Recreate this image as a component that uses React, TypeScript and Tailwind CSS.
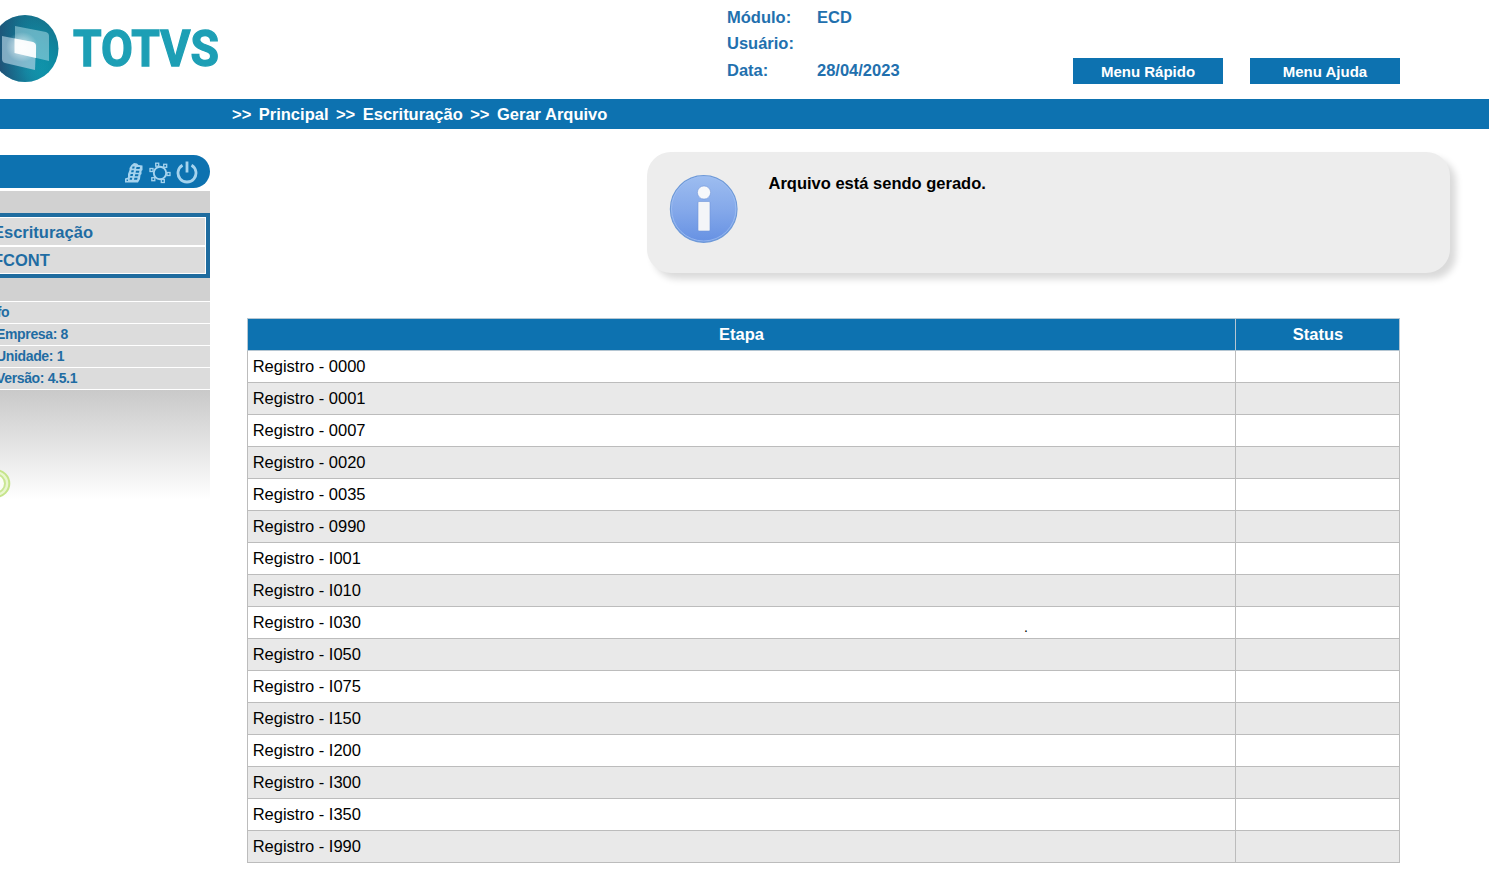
import clsx from "clsx";

const STEPS = [
  "0000",
  "0001",
  "0007",
  "0020",
  "0035",
  "0990",
  "I001",
  "I010",
  "I030",
  "I050",
  "I075",
  "I150",
  "I200",
  "I300",
  "I350",
  "I990",
];

const CRUMBS = ["Principal", "Escrituração", "Gerar Arquivo"];

const INFO = ["Empresa: 8", "Unidade: 1", "Versão: 4.5.1"];

function Logo() {
  return (
    <svg width="232" height="99" viewBox="0 0 232 99" className="shrink-0">
      <defs>
        <radialGradient id="ball" cx="0.5" cy="0.85" r="0.9">
          <stop offset="0" stopColor="#12a3b8" />
          <stop offset="0.5" stopColor="#0e8ba3" />
          <stop offset="1" stopColor="#17708a" />
        </radialGradient>
        <linearGradient id="shade" x1="0" y1="0.6" x2="1" y2="0.4">
          <stop offset="0" stopColor="#2b3560" stopOpacity="0.8" />
          <stop offset="0.4" stopColor="#1d4a73" stopOpacity="0.4" />
          <stop offset="0.8" stopColor="#0f8aa5" stopOpacity="0" />
        </linearGradient>
        <radialGradient id="glow">
          <stop offset="0" stopColor="#fff" stopOpacity="0.75" />
          <stop offset="1" stopColor="#fff" stopOpacity="0" />
        </radialGradient>
      </defs>
      <circle cx="25" cy="48.5" r="33.5" fill="url(#ball)" />
      <circle cx="25" cy="48.5" r="33.5" fill="url(#shade)" />
      <path d="M15 26 L46 32 Q49 33 49 36 L49 61 L15 53Z" fill="#a9dbe6" fillOpacity="0.55" />
      <path d="M2 36 L33 42 Q36 43 36 46 L35 70 L5 63 Q2 62 2 59Z" fill="#b9d6e6" fillOpacity="0.65" />
      <path d="M14.5 38.5 L33 42 Q36 43 36 46 L36 58 L14.5 53Z" fill="#fff" fillOpacity="0.9" />
      <ellipse cx="22" cy="47" rx="16" ry="15" fill="url(#glow)" />
      <text
        x="73"
        y="66"
        textLength="146"
        lengthAdjust="spacingAndGlyphs"
        fill="#1d9fb5"
        stroke="#1d9fb5"
        strokeWidth="1.3"
        className="font-['Roboto',sans-serif] text-[50px] font-bold"
      >
        TOTVS
      </text>
    </svg>
  );
}

function InfoIcon() {
  return (
    <svg width="70" height="70" viewBox="0 0 70 70" className="shrink-0">
      <defs>
        <linearGradient id="info" x1="0" y1="0" x2="0" y2="1">
          <stop offset="0" stopColor="#9dbdf0" />
          <stop offset="0.5" stopColor="#85a9ea" />
          <stop offset="1" stopColor="#6691e3" />
        </linearGradient>
      </defs>
      <circle cx="34.7" cy="35" r="33.3" fill="url(#info)" stroke="#6f9ad8" strokeWidth="1.2" />
      <circle cx="34.7" cy="34.8" r="32.2" fill="none" stroke="#9fbff2" strokeWidth="0.8" />
      <circle cx="35" cy="18.5" r="6.6" fill="#f7f8fb" stroke="#7195d8" strokeWidth="0.6" />
      <rect x="29" y="27.5" width="12" height="29.5" rx="1" fill="#f4f5f8" stroke="#7195d8" strokeWidth="0.6" />
    </svg>
  );
}

function ServerIcon() {
  return (
    <svg width="20" height="22" viewBox="0 0 20 22" fill="#a5d3ee">
      <path d="M7.5 3 L10 1 L13 1.5 L14.5 3 L18.5 3.5 L18.5 8 L17.5 9 L17.5 12 L16.5 13 L16 17 L14 20.5 L1 20.5 L1 16.5 L4 15.5 L4 12 L5.5 8 L5.5 6Z" />
      <g fill="#0d72b0">
        <path d="M8.5 4.5h2.2l-.4 2h-2.2zM12.5 5h3.5l-.4 2h-3.5z" />
        <path d="M7.5 8.2h2.4l-.4 2H7.1zM12 8.7h3.4l-.4 2h-3.4z" />
        <path d="M6.6 11.9h2.5l-.4 2H6.2zM11.2 12.3h3.3l-.4 2h-3.3z" />
        <path d="M6 15.8h2.3l-.4 1.9H5.6zM10.4 15.8h3.2l-.5 1.9h-3.1zM2.6 17.6h1.3v1.3H2.6z" />
      </g>
    </svg>
  );
}

function NodesIcon() {
  return (
    <svg width="22" height="22" viewBox="0 0 22 22" fill="none" stroke="#a5d3ee" strokeWidth="1.3">
      <circle cx="11" cy="11" r="6.2" strokeWidth="1.9" />
      <g fill="#0d72b0">
        <rect x="6.7" y="1.2" width="3" height="3" />
        <rect x="14.7" y="2.3" width="3" height="3" />
        <rect x="18" y="10.5" width="3" height="3" />
        <rect x="12.3" y="17.5" width="3" height="3" />
        <rect x="2.8" y="15.7" width="3" height="3" />
        <rect x="1" y="6.5" width="3" height="3" />
      </g>
    </svg>
  );
}

function PowerIcon() {
  return (
    <svg width="22" height="24" viewBox="0 0 22 24" fill="none" stroke="#a5d3ee" strokeWidth="2.8">
      <path d="M6.5 4.2 A9 9 0 1 0 15.5 4.2" />
      <path d="M11 0.5 V11.5" />
    </svg>
  );
}

function Header() {
  return (
    <header className="flex h-[99px]">
      <Logo />
      <dl className="ml-[495px] grid w-[346px] grid-cols-[90px_1fr] grid-rows-[26px_27px_26px] pt-1 text-[16.5px] leading-[26px] font-bold text-[#2270ae]">
        <dt>Módulo:</dt>
        <dd>ECD</dd>
        <dt>Usuário:</dt>
        <dd />
        <dt>Data:</dt>
        <dd>28/04/2023</dd>
      </dl>
      <div className="mt-[58px] flex gap-[27px]">
        {["Menu Rápido", "Menu Ajuda"].map((label) => (
          <button
            key={label}
            type="button"
            className="h-[26px] w-[150px] bg-[#0d72b0] pt-0.5 text-[15px] leading-6 font-bold text-white"
          >
            {label}
          </button>
        ))}
      </div>
    </header>
  );
}

function Sidebar() {
  return (
    <aside className="w-[210px] shrink-0 overflow-hidden pt-[26px] font-bold whitespace-nowrap text-[#1f6ca3]">
      <div className="mb-[3px] flex h-[33px] items-center justify-end gap-[5px] rounded-r-full bg-[#0d72b0] pt-[2px] pr-[12px]">
        <ServerIcon />
        <NodesIcon />
        <PowerIcon />
      </div>
      <div className="h-[22px] bg-[#d1d1d1]" />
      <nav className="border-4 border-l-0 border-[#1f6c9f] bg-white py-px pr-px text-[16.5px]">
        <div className="-ml-[7px] h-[27px] bg-[#dcdcdc] leading-[28px]">Escrituração</div>
        <div className="mt-[2px] -ml-[7px] h-[26px] bg-[#dcdcdc] leading-[26px]">FCONT</div>
      </nav>
      <div className="h-[23px] bg-[#d1d1d1]" />
      <ul className="text-[14px] leading-[20px] tracking-[-0.35px]">
        <li className="h-[22px] border-t border-white bg-[#dcdcdc]">
          <span className="-ml-[15px]">Info</span>
        </li>
        {INFO.map((text) => (
          <li key={text} className="h-[22px] border-t border-white bg-[#dcdcdc]">
            <span className="-ml-1">{text}</span>
          </li>
        ))}
      </ul>
      <div className="h-[110px] border-t border-white bg-linear-to-b from-[#c9c9c9] to-white pt-[78px]">
        <svg width="12" height="31" viewBox="0 0 12 31" fill="none">
          <circle cx="-4" cy="15.5" r="13.3" stroke="#c5e48a" strokeWidth="2" fill="#e9f6cf" />
          <circle cx="-4" cy="15.5" r="9" stroke="#c9e693" strokeWidth="2" fill="#fbfdf6" />
        </svg>
      </div>
    </aside>
  );
}

function StepsTable() {
  return (
    <table className="ml-[37px] w-[1153px] table-fixed border-collapse text-[16.5px] leading-[31px]">
      <colgroup>
        <col className="w-[988px]" />
        <col className="w-[164px]" />
      </colgroup>
      <thead>
        <tr className="h-8 bg-[#0d72b0] text-white">
          <th className="border border-[#b5c6d2] p-0">Etapa</th>
          <th className="border border-[#b5c6d2] p-0 pl-px">Status</th>
        </tr>
      </thead>
      <tbody>
        {STEPS.map((code, i) => (
          <tr key={code} className={clsx("h-8", i % 2 === 1 && "bg-[#e9e9e9]")}>
            <td className="relative border border-[#bcbcbc] p-0 pl-[4.7px]">
              Registro - {code}
              {code === "I030" && (
                <span className="absolute top-[5px] left-[776px] text-[14px]">.</span>
              )}
            </td>
            <td className="border border-[#bcbcbc] p-0" />
          </tr>
        ))}
      </tbody>
    </table>
  );
}

export default function App() {
  return (
    <div className="h-[892px] w-[1489px] overflow-hidden bg-white font-['Liberation_Sans',Arial,sans-serif] text-black">
      <Header />
      <div className="flex h-[30px] gap-[7.5px] bg-[#0d72b0] pl-[232px] text-[16.5px] leading-[30px] font-bold text-white">
        {CRUMBS.map((crumb) => (
          <span key={crumb} className="flex gap-[7.5px]">
            <span>&gt;&gt;</span>
            <span>{crumb}</span>
          </span>
        ))}
      </div>
      <div className="flex">
        <Sidebar />
        <main className="flex-1 pt-[23px]">
          <div className="mb-[45px] ml-[437px] flex h-[121px] w-[803px] gap-[29.5px] rounded-[24px] bg-[#ededed] pt-[22px] pl-[22px] shadow-[6px_6px_7px_rgba(0,0,0,0.15)]">
            <InfoIcon />
            <p className="text-[16.5px] leading-[19px] font-bold">Arquivo está sendo gerado.</p>
          </div>
          <StepsTable />
        </main>
      </div>
    </div>
  );
}
